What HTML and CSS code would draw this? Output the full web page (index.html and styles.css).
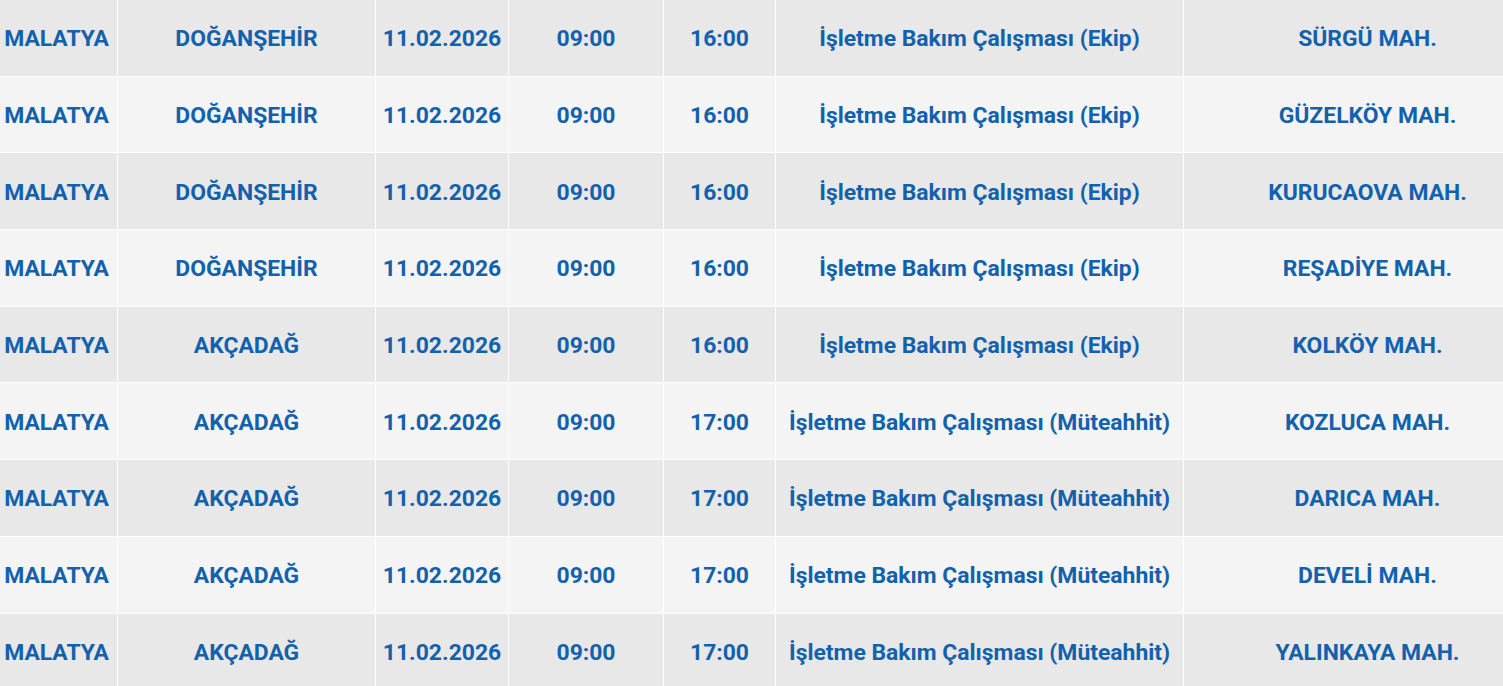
FILE: index.html
```html
<!DOCTYPE html>
<html lang="tr">
<head>
<meta charset="utf-8">
<title>Planlı Kesintiler</title>
<link rel="stylesheet" href="styles.css">
</head>
<body>
<div class="wrap">
<table class="outages">
<colgroup>
<col class="c1"><col class="c2"><col class="c3"><col class="c4"><col class="c5"><col class="c6"><col class="c7">
</colgroup>
<tbody>
<tr><td>MALATYA</td><td>DOĞANŞEHİR</td><td>11.02.2026</td><td>09:00</td><td>16:00</td><td>İşletme Bakım Çalışması (Ekip)</td><td>SÜRGÜ MAH.</td></tr>
<tr><td>MALATYA</td><td>DOĞANŞEHİR</td><td>11.02.2026</td><td>09:00</td><td>16:00</td><td>İşletme Bakım Çalışması (Ekip)</td><td>GÜZELKÖY MAH.</td></tr>
<tr><td>MALATYA</td><td>DOĞANŞEHİR</td><td>11.02.2026</td><td>09:00</td><td>16:00</td><td>İşletme Bakım Çalışması (Ekip)</td><td>KURUCAOVA MAH.</td></tr>
<tr><td>MALATYA</td><td>DOĞANŞEHİR</td><td>11.02.2026</td><td>09:00</td><td>16:00</td><td>İşletme Bakım Çalışması (Ekip)</td><td>REŞADİYE MAH.</td></tr>
<tr><td>MALATYA</td><td>AKÇADAĞ</td><td>11.02.2026</td><td>09:00</td><td>16:00</td><td>İşletme Bakım Çalışması (Ekip)</td><td>KOLKÖY MAH.</td></tr>
<tr><td>MALATYA</td><td>AKÇADAĞ</td><td>11.02.2026</td><td>09:00</td><td>17:00</td><td>İşletme Bakım Çalışması (Müteahhit)</td><td>KOZLUCA MAH.</td></tr>
<tr><td>MALATYA</td><td>AKÇADAĞ</td><td>11.02.2026</td><td>09:00</td><td>17:00</td><td>İşletme Bakım Çalışması (Müteahhit)</td><td>DARICA MAH.</td></tr>
<tr><td>MALATYA</td><td>AKÇADAĞ</td><td>11.02.2026</td><td>09:00</td><td>17:00</td><td>İşletme Bakım Çalışması (Müteahhit)</td><td>DEVELİ MAH.</td></tr>
<tr><td>MALATYA</td><td>AKÇADAĞ</td><td>11.02.2026</td><td>09:00</td><td>17:00</td><td>İşletme Bakım Çalışması (Müteahhit)</td><td>YALINKAYA MAH.</td></tr>
</tbody>
</table>
</div>
</body>
</html>
```
FILE: styles.css
```css
html, body {
  margin: 0;
  padding: 0;
  overflow: hidden;
  background: #ffffff;
}
.wrap {
  margin-left: -4px;
  width: 1556px;
}
.outages {
  table-layout: fixed;
  width: 1556px;
  border-collapse: separate;
  border-spacing: 0;
  font-family: Roboto, "Liberation Sans", Arial, sans-serif;
  font-weight: 700;
  font-size: 22.9px;
  color: #1261ad;
}
.c1 { width: 122px; }
.c2 { width: 258px; }
.c3 { width: 133px; }
.c4 { width: 155px; }
.c5 { width: 112px; }
.c6 { width: 408px; }
.c7 { width: 368px; }
.outages td {
  box-sizing: border-box;
  height: 76.7px;
  padding: 2px 2px 0;
  text-align: center;
  vertical-align: middle;
  white-space: nowrap;
  border-right: 1px solid #ffffff;
  border-bottom: 1px solid #ffffff;
  background: #e8e8e8;
}
.outages tr:nth-child(even) td {
  background: #f4f4f4;
}
```
